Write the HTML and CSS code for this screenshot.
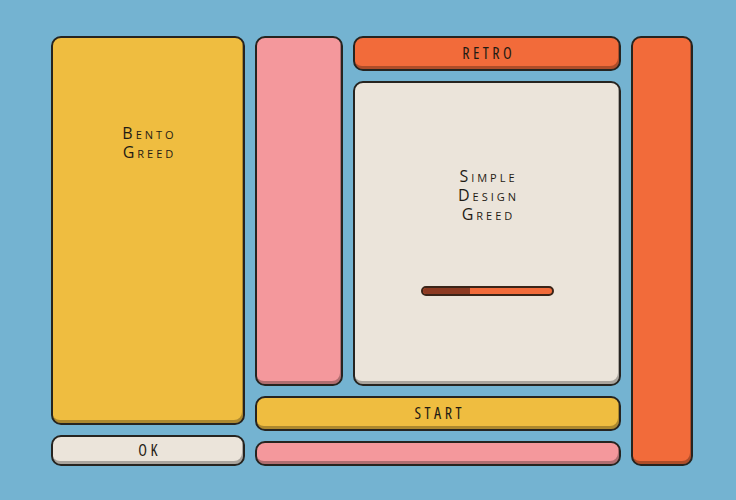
FILE: index.html
```html
<!DOCTYPE html>
<html>
<head>
<meta charset="utf-8">
<link rel="stylesheet" href="styles.css">
</head>
<body>
<div class="board">
  <div class="col col-left">
    <div class="tile yellow hero"><div class="label sc">Bento<br>Greed</div></div>
    <div class="tile cream btn ok"><span class="caps">OK</span></div>
  </div>
  <div class="col col-mid">
    <div class="top">
      <div class="tile pink tall"></div>
      <div class="stack">
        <div class="tile orange btn retro"><span class="caps">Retro</span></div>
        <div class="tile cream main">
          <div class="label sc tallines">Simple<br>Design<br>Greed</div>
          <div class="progress"><div class="fill" style="width:37%"></div></div>
        </div>
      </div>
    </div>
    <div class="tile yellow btn start"><span class="caps">Start</span></div>
    <div class="tile pink bar"></div>
  </div>
  <div class="tile orange col-right"></div>
</div>
</body>
</html>
```
FILE: styles.css
```css
* { box-sizing: border-box; }
html, body { margin: 0; padding: 0; }
body {
  background: #74b3d1;
  width: 736px;
  height: 500px;
  overflow: hidden;
  font-family: "Open Sans", "DejaVu Sans", sans-serif;
  font-stretch: condensed;
  font-weight: 500;
  color: #1f1b14;
}
.board {
  display: flex;
  gap: 10px;
  width: 642px;
  height: 430px;
  margin: 36px 0 0 51px;
}
.col { display: flex; flex-direction: column; gap: 10px; }
.col-left { width: 194px; }
.col-mid { flex: 1; }
.col-right { width: 62px; }
.top { flex: 1; display: flex; gap: 10px; }
.stack { flex: 1; display: flex; flex-direction: column; gap: 10px; }

.tile {
  border: 2px solid #262420;
  border-radius: 10px;
  box-shadow: inset -1px -3px 0 rgba(0,0,0,0.28);
}
.yellow { background: #efbd40; }
.pink { background: #f4989c; }
.orange { background: #f26b3a; }
.cream { background: #ebe4da; }

.hero { flex: 1; padding-top: 86px; }
.ok { height: 31px; }
.tall { width: 88px; }
.retro { height: 35px; }
.main { flex: 1; padding-top: 84px; display: flex; flex-direction: column; align-items: center; }
.start { height: 35px; }
.bar { height: 25px; }

.btn { display: flex; align-items: center; justify-content: center; padding-bottom: 1px; }
.caps {
  text-transform: uppercase;
  font-size: 16px;
  line-height: 20px;
  letter-spacing: 3.5px;
  margin-right: -3.5px;
}
.label {
  text-align: center;
  font-size: 16px;
  font-stretch: normal;
  line-height: 18.5px;
  letter-spacing: 3px;
  margin-right: -3px;
}
.tallines { line-height: 19px; }
.sc { font-variant: small-caps; }
.progress {
  margin-top: 62px;
  width: 133px;
  height: 10px;
  border: 2px solid #3a2418;
  border-radius: 5px;
  background: #f26b3a;
  overflow: hidden;
}
.fill { height: 100%; background: #8c3a22; }
```
